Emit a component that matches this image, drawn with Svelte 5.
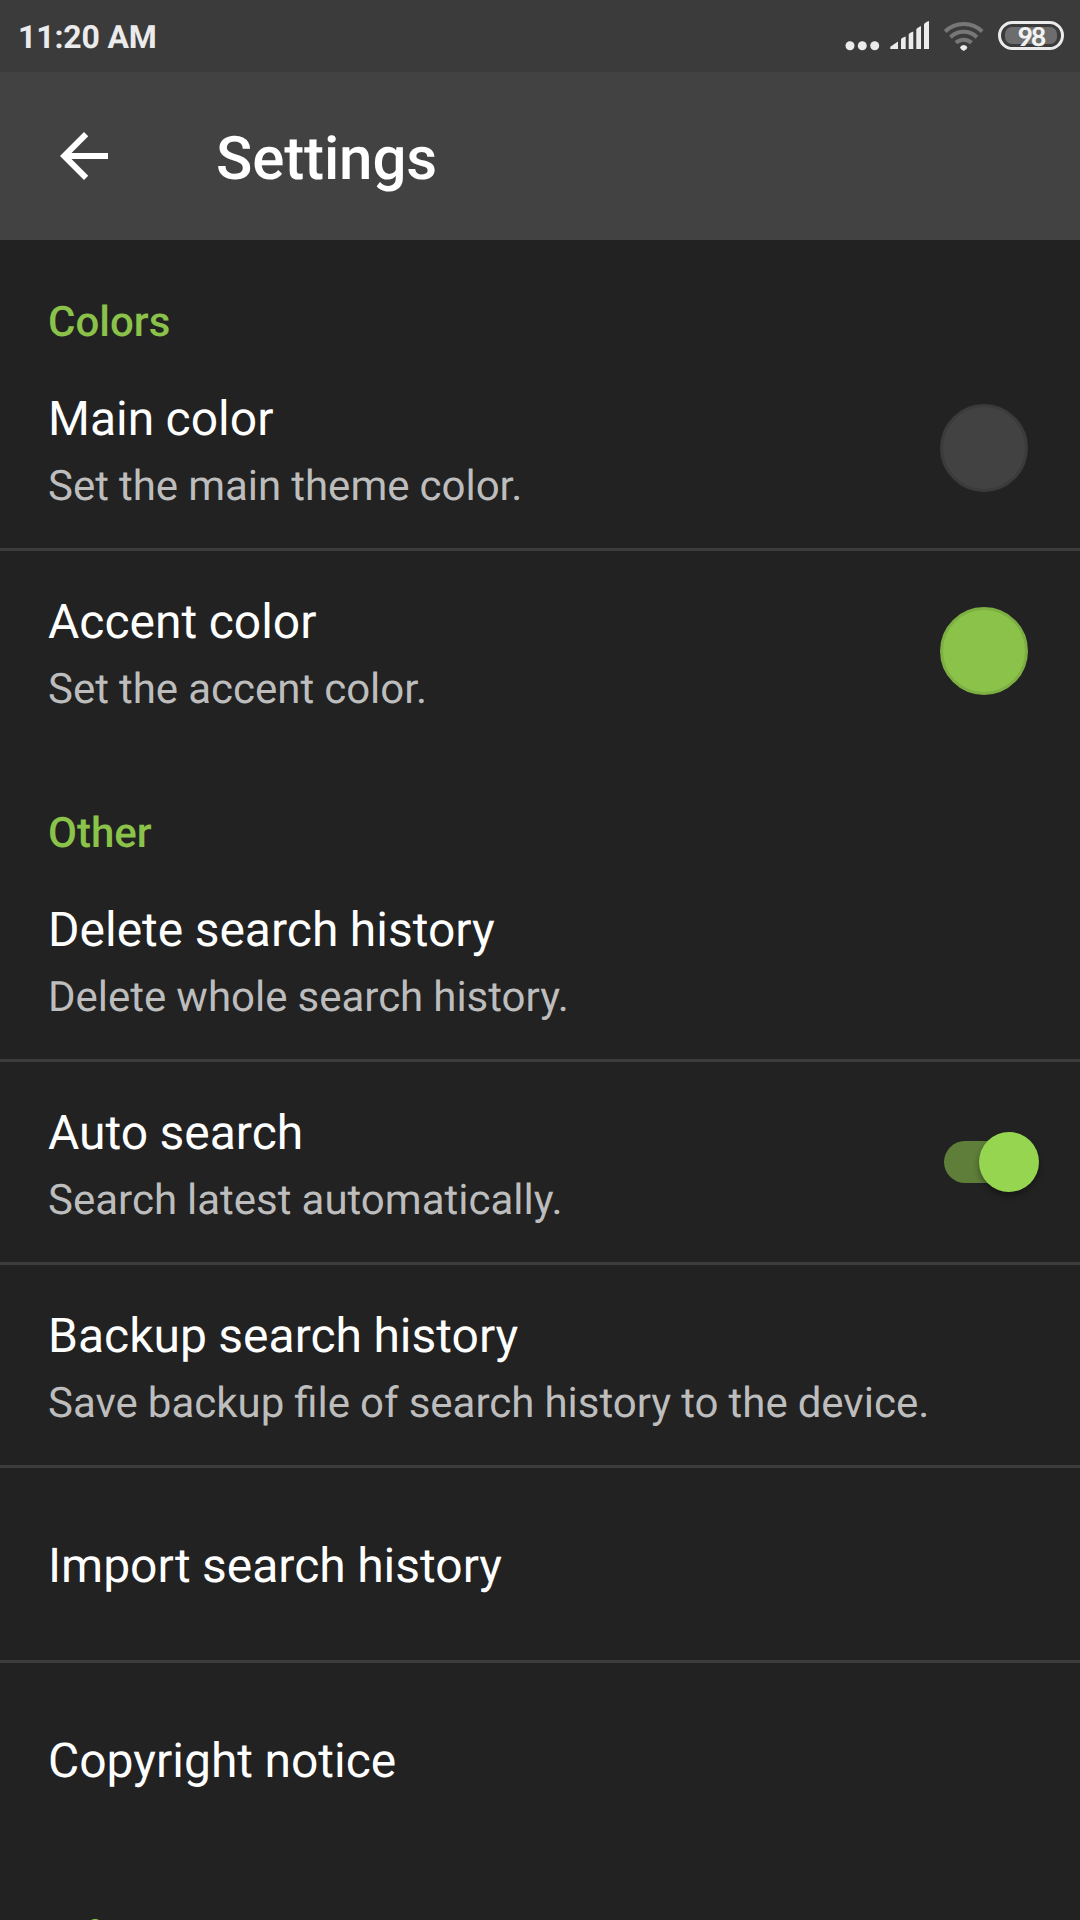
<script>
  const sections = [
    {
      name: 'Colors',
      rows: [
        { title: 'Main color', note: 'Set the main theme color.', swatch: 'main' },
        { title: 'Accent color', note: 'Set the accent color.', swatch: 'accent' }
      ]
    },
    {
      name: 'Other',
      rows: [
        { title: 'Delete search history', note: 'Delete whole search history.' },
        { title: 'Auto search', note: 'Search latest automatically.', toggle: true },
        { title: 'Backup search history', note: 'Save backup file of search history to the device.' },
        { title: 'Import search history' },
        { title: 'Copyright notice' }
      ]
    },
    { name: 'Info', rows: [] }
  ];
</script>

<div class="screen">
  <div class="status">
    <span class="time">11:20 AM</span>
    <svg class="indicators" width="158" height="72" viewBox="0 0 158 72">
      <g fill="#ebebeb">
        <circle cx="10" cy="45.7" r="4.5" />
        <circle cx="22.3" cy="45.7" r="4.5" />
        <circle cx="34.7" cy="45.7" r="4.5" />
        <path d="M50.3 49v-2.2L58 41.4V49zM61 49V39.5Q61 38 65.7 36.5V49zM68.7 49V34.5Q69 33 73.3 31.5V49zM76.3 49V29.5Q76.5 28 81 26V49zM84 49V24.5Q84.3 22.5 89 21V49z" />
        <path d="M123.7 45q3 0 3.7 2.5q-.3 1.5-3.7 3.5q-3.4-2-3.7-3.5q.7-2.5 3.7-2.5z" />
      </g>
      <g fill="none" stroke="#777" stroke-width="4">
        <path d="M105.2 31.5a26.5 26.5 0 0 1 37 0" />
        <path d="M110.5 37.2a19 19 0 0 1 26.4 0" />
        <path d="M115.9 42.7a11.5 11.5 0 0 1 15.6 0" />
      </g>
    </svg>
    <div class="battery"><span class="level">98</span></div>
  </div>

  <header>
    <svg class="back" width="72" height="72" viewBox="0 0 24 24">
      <path fill="#fff" d="M20 11H7.83l5.59-5.59L12 4l-8 8 8 8 1.41-1.41L7.83 13H20z" />
    </svg>
    <h1>Settings</h1>
  </header>

  <main>
    {#each sections as section}
      <section>
        <h2>{section.name}</h2>
        {#each section.rows as row}
          <div class="row" class:single={!row.note}>
            <div class="text">
              <div class="title">{row.title}</div>
              {#if row.note}<div class="note">{row.note}</div>{/if}
            </div>
            {#if row.swatch}<div class="swatch {row.swatch}"></div>{/if}
            {#if row.toggle}<div class="toggle"><div class="thumb"></div></div>{/if}
          </div>
        {/each}
      </section>
    {/each}
  </main>
</div>

<style>
  :global(body) {
    margin: 0;
    background: #222;
  }
  .screen {
    width: 1080px;
    height: 1920px;
    overflow: hidden;
    background: #222;
    color: #fff;
    font-family: Roboto, sans-serif;
    text-rendering: geometricPrecision;
  }
  .status {
    display: flex;
    align-items: center;
    box-sizing: border-box;
    height: 72px;
    padding: 0 16px 0 18px;
    background: #3b3b3b;
  }
  .time {
    flex: 1;
    margin-top: 2px;
    font-size: 32px;
    line-height: 38px;
    font-weight: 700;
    letter-spacing: -0.15px;
    color: #ebebeb;
  }
  .indicators {
    flex: none;
  }
  .battery {
    box-sizing: border-box;
    width: 66px;
    height: 29px;
    border: 3px solid #ebebeb;
    border-radius: 15px;
    padding: 3px 4px;
    margin-bottom: 1px;
  }
  .level {
    display: flex;
    align-items: center;
    justify-content: center;
    box-sizing: border-box;
    height: 17px;
    padding-top: 2px;
    border-radius: 7px;
    background: #6d6d6d;
    color: #f2f2f2;
    font: 900 26px/17px Lato, sans-serif;
    letter-spacing: -1.8px;
  }
  header {
    display: flex;
    align-items: center;
    height: 168px;
    padding-left: 48px;
    background: #424242;
  }
  .back {
    flex: none;
  }
  h1 {
    margin: 5px 0 0 96px;
    font-size: 60px;
    line-height: 70px;
    font-weight: 500;
    letter-spacing: -0.12px;
  }
  h2 {
    box-sizing: border-box;
    height: 108px;
    margin: 0;
    padding: 58px 48px 0;
    font-size: 42px;
    line-height: 49px;
    font-weight: 500;
    color: #8bc34a;
  }
  .row {
    display: flex;
    align-items: center;
    justify-content: space-between;
    height: 200px;
    padding: 0 52px 0 48px;
    border-bottom: 3px solid #3d3d3d;
  }
  .row.single {
    height: 192px;
  }
  .row:last-child {
    border-bottom: 0;
  }
  .text {
    padding-top: 6px;
  }
  .single .text {
    padding-top: 4px;
  }
  .title {
    font-size: 48px;
    line-height: 56px;
    word-spacing: -0.5px;
  }
  .note {
    margin-top: 15px;
    font-size: 42px;
    line-height: 49px;
    word-spacing: -0.4px;
    color: #bdbdbd;
  }
  .swatch {
    box-sizing: border-box;
    width: 88px;
    height: 88px;
    border-radius: 50%;
    border: 3px solid #3b3b3b;
    background: #424242;
  }
  .swatch.accent {
    border-color: #7daf43;
    background: #8bc34a;
  }
  .toggle {
    display: flex;
    align-items: center;
    justify-content: flex-end;
    width: 96px;
    height: 42px;
    margin-right: -12px;
    border-radius: 21px;
    background: linear-gradient(to right, #5e7e39 70px, transparent 70px);
  }
  .thumb {
    width: 60px;
    height: 60px;
    flex: none;
    margin: -1px 1px 0 0;
    border-radius: 50%;
    background: #96d550;
    box-shadow: 0 4px 6px rgba(0, 0, 0, 0.35);
  }
</style>
